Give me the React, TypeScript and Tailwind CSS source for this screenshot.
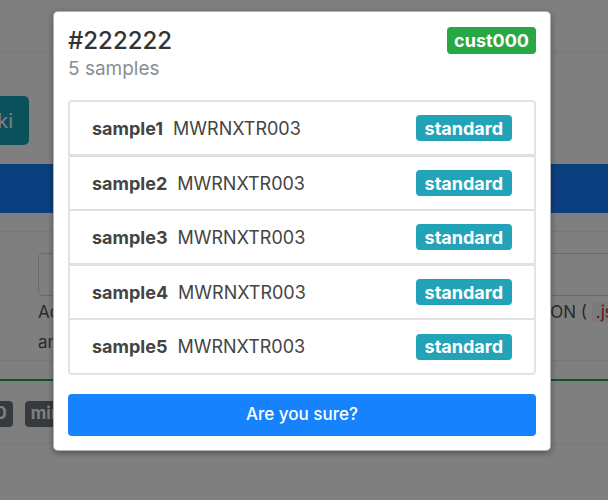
import React from "react";

const samples = ["sample1", "sample2", "sample3", "sample4", "sample5"];

// separators between rows alternate a little in the reference
const rowClass = [
    "h-[55px] border-b-[3px]",
    "h-[54px] border-b-2",
    "h-[55px] border-b-[3px]",
    "h-[54px] border-b-2",
    "h-[53px]",
];

const BackgroundPage = () => {
    return (
        <div className="w-[608px] h-[500px] overflow-hidden bg-white text-[17px] text-[#212529]">
            <div className="h-[53px] border-b border-[#eeeeee]"></div>
            <div className="h-[43px]"></div>
            <div className="h-[49px] w-[100px] ml-[-71px] bg-[#17a2b8] rounded-[5px] text-white flex items-center justify-end pr-[16px] text-[20px]">
                Wiki
            </div>
            <div className="h-[19px]"></div>
            <div className="h-[49px] bg-[#197ffe]"></div>
            <div className="h-[19px] border-b border-[#eeeeee]"></div>
            <div className="pl-[38px] pt-[21px]">
                <div className="h-[43px] w-[580px] border border-[#d4d4d4] rounded-[5px]"></div>
                <p className="leading-[30px] mt-[1px] text-[#555] flex justify-between">
                    <span>Add</span>
                    <span className="mr-[-30px]">
                        JSON ({" "}
                        <span className="bg-[#f4f4f4] text-[#c7254e] px-[4px] rounded">.json</span>
                    </span>
                </p>
                <p className="leading-[30px] text-[#555]">and</p>
            </div>
            <div className="h-[1px] mt-[3px] bg-[#eeeeee]"></div>
            <div className="h-[18px]"></div>
            <div className="h-[2px] bg-[#28a745]"></div>
            <div className="flex gap-[12px] ml-[-18px] mt-[20px]">
                <span className="h-[26px] px-[6px] bg-[#6c757d] text-white font-bold rounded-[4px] flex items-center">
                    10
                </span>
                <span className="h-[26px] px-[6px] bg-[#6c757d] text-white font-bold rounded-[4px] flex items-center">
                    min
                </span>
            </div>
            <div className="h-[1px] mt-[16px] bg-[#eeeeee]"></div>
        </div>
    );
};

const App = () => {
    return (
        <div
            className="relative w-[608px] h-[500px] overflow-hidden"
            style={{ fontFamily: "Inter, 'Noto Sans', sans-serif" }}
        >
            <BackgroundPage />
            <div className="absolute inset-0 bg-black/50"></div>

            <div className="absolute left-[53px] top-[11px] w-[498px] bg-white rounded-[5px] border border-black/30 shadow-[0_2px_6px_rgba(0,0,0,0.35)] p-[14px]">
                <div className="flex justify-between items-start">
                    <div>
                        <h2 className="text-[24px] leading-[30px] font-medium text-[#333]">
                            #222222
                        </h2>
                        <p className="text-[19px] leading-[24px] mt-[1px] text-[#868e96]">
                            5 samples
                        </p>
                    </div>
                    <span className="mt-[1px] h-[27px] px-[7px] bg-[#28a745] text-white font-bold text-[18px] rounded-[4px] flex items-center">
                        cust000
                    </span>
                </div>

                <ul className="mt-[19px] border-2 border-[#e3e3e3] rounded-[4px]">
                    {samples.map((name, i) => (
                        <li
                            key={name}
                            className={`flex items-center justify-between pl-[22px] pr-[22px] border-[#e0e0e0] ${rowClass[i]}`}
                        >
                            <span className="text-[18px] text-[#444]">
                                <span className="font-bold mr-[10px]">{name}</span>
                                <span>MWRNXTR003</span>
                            </span>
                            <span className="h-[26px] px-[9px] bg-[#23a3b8] text-white font-bold text-[18px] rounded-[4px] flex items-center">
                                standard
                            </span>
                        </li>
                    ))}
                </ul>

                <button className="mt-[19px] w-full h-[42px] bg-[#1682fc] text-white text-[17px] font-medium rounded-[4px]">
                    Are you sure?
                </button>
            </div>
        </div>
    );
};

export default App;
